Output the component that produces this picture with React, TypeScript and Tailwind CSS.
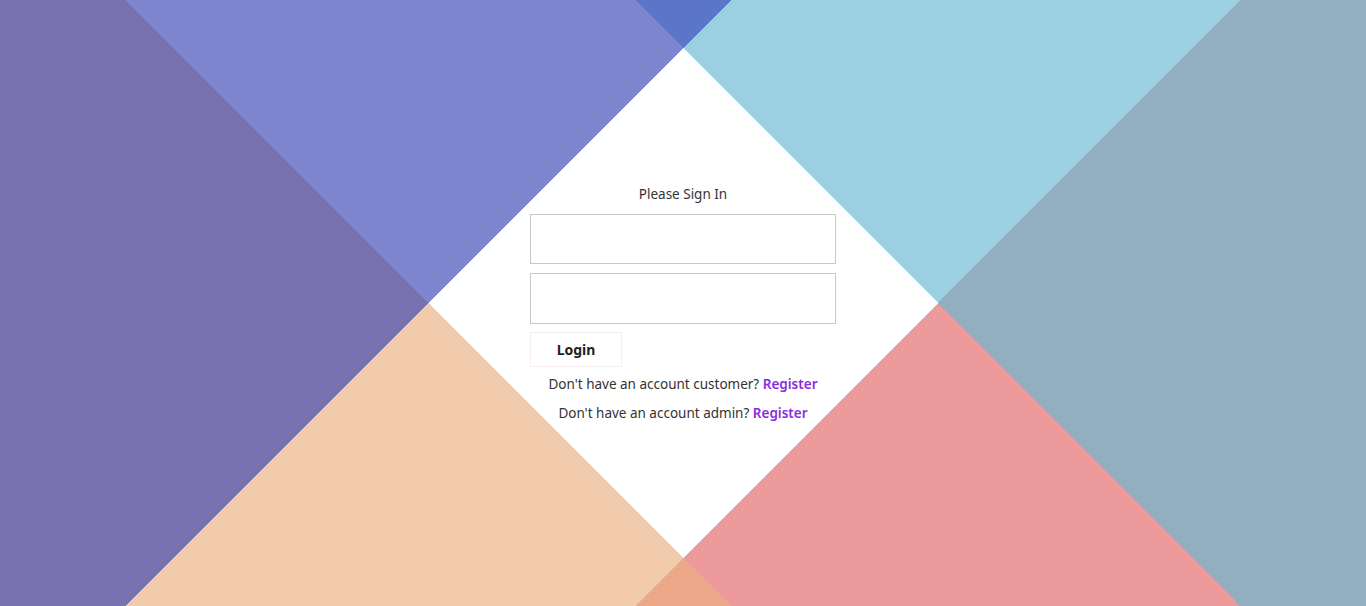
export default function App() {
  return (
    <div className="relative h-[606px] w-full overflow-hidden bg-white font-['Noto_Sans',sans-serif] text-[13.5px] text-[#333]">
      {/* background art: colour triangles around a white diamond */}
      <svg
        className="absolute inset-0 h-full w-full"
        viewBox="0 0 1366 606"
        preserveAspectRatio="none"
        shapeRendering="crispEdges"
      >
        <polygon points="0,0 731,0 428,303 0,303" fill="#7e86d0" />
        <polygon points="0,303 428,303 731,606 0,606" fill="#f2cbad" />
        <polygon points="635,0 1366,0 1366,303 938,303" fill="#9ad0e2" />
        <polygon points="938,303 1366,303 1366,606 635,606" fill="#ed9a9c" />
        <polygon points="635,0 731,0 683,48" fill="#5b76c6" />
        <polygon points="635,606 731,606 683,558" fill="#eba98a" />
        <polygon points="0,0 125,0 428,303 125,606 0,606" fill="#7872b0" />
        <polygon points="1240,0 1366,0 1366,606 1240,606 938,303" fill="#92aec0" />
      </svg>

      <div className="relative flex flex-col items-center pt-[184px]">
        <form className="flex w-[306px] flex-col" onSubmit={(e) => e.preventDefault()}>
          <h2 className="h-5 text-center leading-5 text-[#333]">Please Sign In</h2>
          <input
            type="text"
            className="mt-[10px] h-[50px] border border-[#c8c8c8] bg-white px-3 outline-none"
          />
          <input
            type="password"
            className="mt-[9px] h-[51px] border border-[#c8c8c8] bg-white px-3 outline-none"
          />
          <button
            type="submit"
            className="mt-[8px] h-[35px] w-[92px] border border-[#f8eeef] bg-white text-[14px] font-bold text-[#222]"
          >
            Login
          </button>
        </form>
        <p className="mt-[7px] leading-5 text-[#333]">
          Don't have an account customer?{" "}
          <a href="#" className="font-semibold text-[#8a2be2]">Register</a>
        </p>
        <p className="mt-[9px] leading-5 text-[#333]">
          Don't have an account admin?{" "}
          <a href="#" className="font-semibold text-[#8a2be2]">Register</a>
        </p>
      </div>
    </div>
  );
}
